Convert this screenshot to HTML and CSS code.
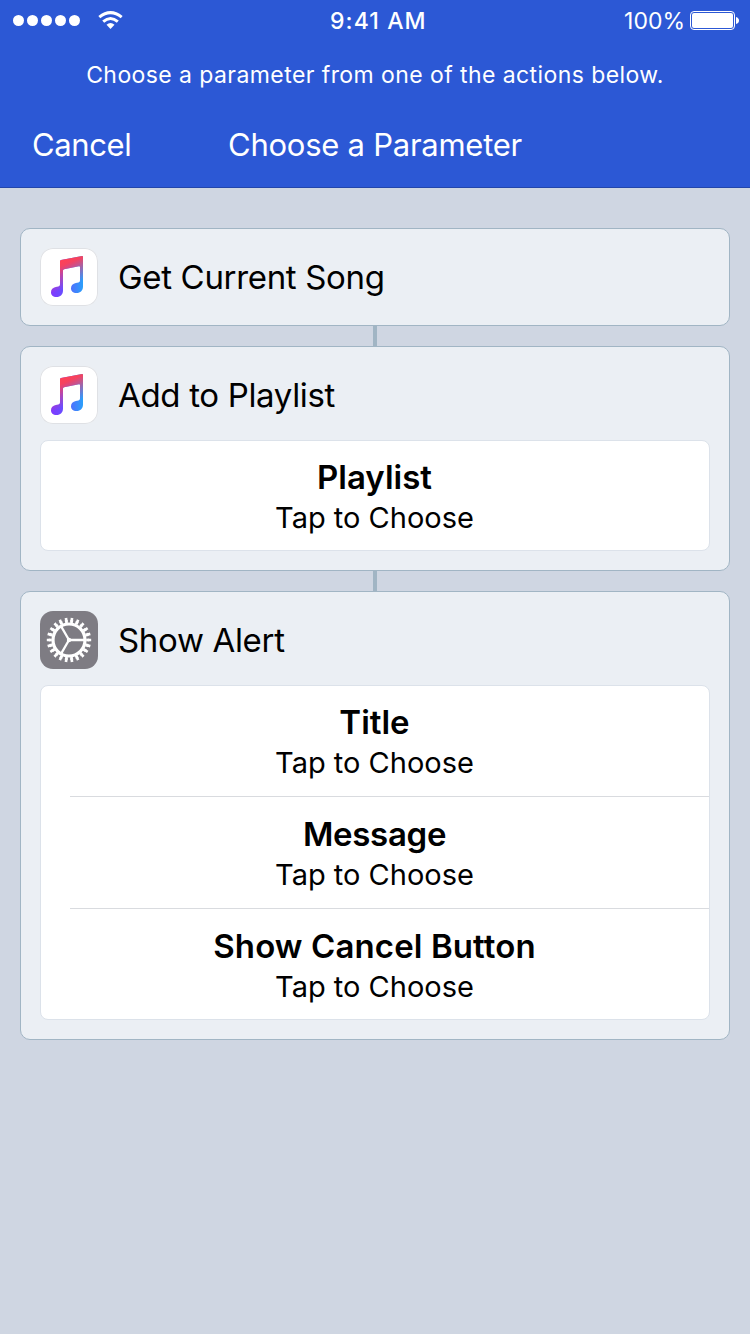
FILE: index.html
```
<!DOCTYPE html>
<html lang="en">
<head>
<meta charset="utf-8">
<title>Choose a Parameter</title>
<link rel="stylesheet" href="styles.css">
</head>
<body>
<svg class="defs" width="0" height="0" aria-hidden="true">
  <defs>
    <linearGradient id="note-side" x1="11" y1="0" x2="43" y2="0" gradientUnits="userSpaceOnUse">
      <stop offset="0" stop-color="#8038ff"/><stop offset=".35" stop-color="#6a4dff"/><stop offset="1" stop-color="#2aa0fa"/>
    </linearGradient>
    <linearGradient id="note-top" x1="24" y1="11" x2="35" y2="36" gradientUnits="userSpaceOnUse">
      <stop offset="0" stop-color="#ff4056"/><stop offset=".2" stop-color="#f5425f"/><stop offset="1" stop-color="#e04490" stop-opacity="0"/>
    </linearGradient>
    <symbol id="music" viewBox="0 0 58 58">
      <path fill="url(#note-side)" d="M21 12 42 8Q43 7.900 43 9V38.500C43 42.500 40.500 45 36.500 45C33 45 31 43 31 40.200C31 37.500 33 35.700 35.800 35.100L38.500 34.500Q40 34.100 40 32.500V19Q40 18 39 18.200L24 21.200Q23 21.400 23 22.400V42.500C23 46.500 20.500 49 16.500 49C13 49 11 47 11 44.200C11 41.500 13 39.700 15.800 39.100L18.500 38.500Q20 38.100 20 36.500V13.200Q20 12.200 21 12Z"/>
      <path fill="url(#note-top)" d="M21 12 42 8Q43 7.900 43 9V38.500C43 42.500 40.500 45 36.500 45C33 45 31 43 31 40.200C31 37.500 33 35.700 35.800 35.100L38.500 34.500Q40 34.100 40 32.500V19Q40 18 39 18.200L24 21.200Q23 21.400 23 22.400V42.500C23 46.500 20.500 49 16.500 49C13 49 11 47 11 44.200C11 41.500 13 39.700 15.800 39.100L18.500 38.500Q20 38.100 20 36.500V13.200Q20 12.200 21 12Z"/>
    </symbol>
  </defs>
</svg>
<header class="header">
  <div class="status">
    <div class="signal"><i></i><i></i><i></i><i></i><i></i></div>
    <svg class="wifi" width="26" height="20" viewBox="0 0 26 20" fill="none" stroke="#fff">
      <path d="M1.300 7.100Q12.500-1.900 23.700 7.100" stroke-width="3"/>
      <path d="M5.200 11.600Q12.500 5.400 19.800 11.600" stroke-width="3"/>
      <path d="M8.500 14.700Q12.500 11.400 16.500 14.700L12.500 19.100Z" fill="#fff" stroke="none"/>
    </svg>
    <span class="time">9:41 AM</span>
    <span class="percent">100%</span>
    <svg class="battery" width="50" height="20" viewBox="0 0 50 20">
      <rect x=".5" y=".5" width="44" height="18" rx="3.500" fill="none" stroke="#fff"/>
      <rect x="2" y="2" width="41" height="15" rx="2" fill="#fff"/>
      <path d="M46 6Q49 7 49 9.500T46 13Z" fill="#fff"/>
    </svg>
  </div>
  <p class="prompt">Choose a parameter from one of the actions below.</p>
  <nav class="nav"><span class="cancel">Cancel</span><h1 class="heading">Choose a Parameter</h1></nav>
</header>
<main class="flow">
  <section class="card">
    <div class="action"><svg class="icon music"><use href="#music"/></svg><h2 class="name">Get Current Song</h2></div>
  </section>
  <div class="link"></div>
  <section class="card">
    <div class="action"><svg class="icon music"><use href="#music"/></svg><h2 class="name">Add to Playlist</h2></div>
    <div class="panel">
      <div class="param"><strong>Playlist</strong><span>Tap to Choose</span></div>
    </div>
  </section>
  <div class="link"></div>
  <section class="card">
    <div class="action">
      <svg class="icon gear" viewBox="0 0 58 58" fill="none" stroke="#fff">
        <circle cx="29" cy="29" r="16" stroke-width="3.200"/>
        <circle cx="29" cy="29" r="18.700" stroke-width="3" pathLength="220" stroke-dasharray="5.600 4.400" stroke-dashoffset="2.800"/>
        <circle cx="29" cy="29" r="20.900" stroke-width="2.600" pathLength="220" stroke-dasharray="4.400 5.600" stroke-dashoffset="2.200"/>
        <path d="M29 29H45M29 29 21 15.200M29 29 21 42.800" stroke-width="2.300"/>
        <circle cx="29" cy="29" r="2.200" fill="#fff" stroke="none"/>
      </svg>
      <h2 class="name">Show Alert</h2>
    </div>
    <div class="panel">
      <div class="param"><strong>Title</strong><span>Tap to Choose</span></div>
      <div class="param"><strong class="tight">Message</strong><span>Tap to Choose</span></div>
      <div class="param"><strong class="wide">Show Cancel Button</strong><span>Tap to Choose</span></div>
    </div>
  </section>
</main>
</body>
</html>
```
FILE: styles.css
```
* { box-sizing: border-box; }
body { margin: 0; min-height: 1334px; background: #cfd6e2; color: #000; font-family: Inter, "Liberation Sans", sans-serif; white-space: nowrap; }
h1, h2, p { margin: 0; font-weight: 400; }
.defs { display: block; height: 0; }
svg { flex: none; }
.header { height: 188px; background: #2c58d5; border-bottom: 1px solid #2346aa; color: #fff; }
.status { display: grid; grid-template-columns: 86px 232px 96px 1fr 50px; align-items: center; height: 41px; padding: 0 10px 0 12px; }
.signal { display: flex; gap: 3px; padding-left: 1px; }
.signal i { width: 11px; height: 11px; border-radius: 50%; background: #fff; }
.wifi { align-self: start; margin-top: 10px; }
.time { font-size: 23px; font-weight: 500; letter-spacing: 1.1px; }
.percent { font-size: 23px; text-align: right; padding-right: 5px; }
.battery { align-self: start; margin-top: 11px; }
.prompt { height: 68px; line-height: 68px; font-size: 23px; letter-spacing: .42px; text-align: center; }
.nav { display: flex; height: 72px; line-height: 71px; font-size: 31px; letter-spacing: -.25px; padding-left: 32px; }
.cancel { width: 196px; letter-spacing: -.4px; }
.heading { font-size: 31px; }
.flow { padding: 40px 20px; }
.card { border: 1px solid #a1b5c4; border-radius: 10px; background: #ebeff4; padding: 19px; }
.action { display: flex; align-items: center; gap: 20px; height: 58px; }
.icon { width: 58px; height: 58px; border-radius: 13px; }
.music { background: #fff; box-shadow: inset 0 0 0 1px #dfe1e5; }
.gear { background: #7e7c83; }
.name { font-size: 33px; letter-spacing: -.33px; }
.link { width: 4px; height: 20px; margin: 0 auto; background: #a1b5c4; }
.panel { margin-top: 16px; border: 1px solid #dce2ea; border-radius: 8px; background: #fff; }
.param { height: 109px; display: flex; flex-direction: column; align-items: center; padding: 16px 1px 0 0; }
.param strong { font-size: 33px; line-height: 40px; font-weight: 600; }
.param .tight { letter-spacing: -.3px; }
.param .wide { letter-spacing: .1px; }
.param span { font-size: 29px; line-height: 41px; }
.param + .param { height: 112px; padding-top: 18px; background: linear-gradient(#d9dbdf, #d9dbdf) 29px 0 / 100% 1px no-repeat; }
.param:first-child:not(:last-child) { height: 110px; }
.param + .param:last-child { height: 111px; }
```
